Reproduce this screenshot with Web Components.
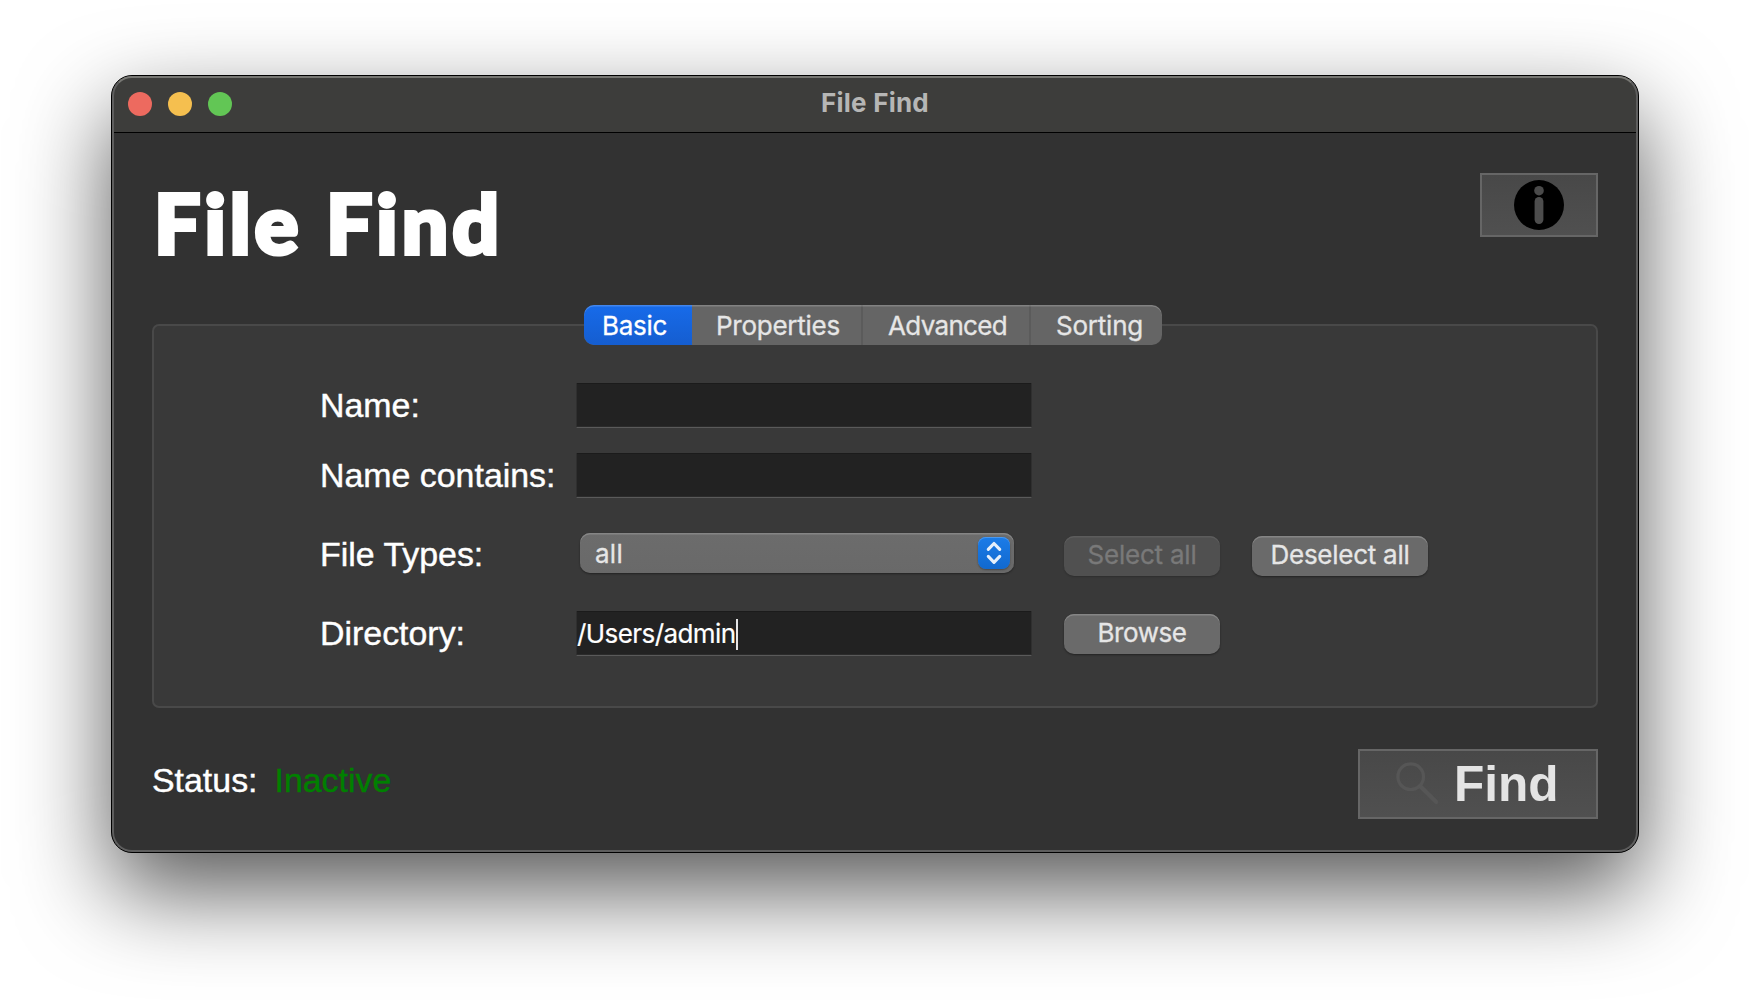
<!DOCTYPE html>
<html lang="en">
<head>
<meta charset="utf-8">
<title>File Find</title>
<style>
html,body{margin:0;height:100%;background:#fff;overflow:hidden}
</style>
</head>
<body>
<file-find-app></file-find-app>
<script>
const define = (name, html, setup) => {
  const t = document.createElement('template');
  t.innerHTML = html;
  customElements.define(name, class extends HTMLElement {
    constructor() {
      super();
      this.attachShadow({ mode: 'open' }).append(t.content.cloneNode(true));
    }
    connectedCallback() { if (setup) setup(this, this.shadowRoot); }
  });
};

/* Label whose tracking is adjusted so that it spans a given advance width */
define('fit-text', `<style>:host{display:inline-block;white-space:pre}span{display:inline-block}</style><span><slot></slot></span>`,
  (el, root) => {
    const w = +el.getAttribute('w');
    if (!w) return;
    const s = root.querySelector('span');
    const n = el.textContent.length;
    s.style.letterSpacing = ((w - s.getBoundingClientRect().width) / n) + 'px';
  });

define('title-bar', `<style>
:host{display:grid;grid-template-columns:1fr auto 1fr;align-items:center;height:57px;box-sizing:border-box;background:#3d3d3b;border-bottom:1px solid #000;box-shadow:inset 0 2px #777773;padding:0 16px}
.l{display:flex;gap:16px}
i{width:24px;height:24px;border-radius:50%}
.r{background:#ed6a5f}.y{background:#f5bf4f}.g{background:#62c655}
.t{font:700 26px/30px Inter,sans-serif;color:#b6b6b5;position:relative;top:-1px}
</style><div class="l"><i class="r"></i><i class="y"></i><i class="g"></i></div><div class="t"><fit-text w="108">File Find</fit-text></div>`);

define('push-button', `<style>
:host{display:flex;align-items:center;justify-content:center;height:40px;box-sizing:border-box;padding-bottom:3px;border-radius:10px;background:#6a6a6a;color:#e6e6e6;font:26px/30px Inter,sans-serif;-webkit-text-stroke:.3px;box-shadow:inset 0 1.5px #858585,0 1px 2px #0006}
:host([disabled]){background:#505050;color:#797979;box-shadow:inset 0 1.5px #5c5c5c,0 1px 2px #0003}
</style><slot></slot>`);

define('text-field', `<style>
:host{display:flex;align-items:center;width:456px;height:45px;box-sizing:border-box;background:#222;border:solid #2f2f2f;border-width:0 1px;border-bottom:1px solid #5a5a5a;box-shadow:inset 0 1px #1b1b1b,inset 0 -1px #2b2b2b;padding-top:2px;color:#fff;font:26px/30px Inter,sans-serif;-webkit-text-stroke:.2px}
:host([focused])::after{content:"";width:2px;height:31px;background:#e6e6e6}
</style><slot></slot>`);

define('pop-up', `<style>
:host{display:flex;align-items:center;justify-content:space-between;width:434px;height:40px;box-sizing:border-box;margin-left:4px;padding:0 4px 0 15px;border-radius:10px;background:linear-gradient(#6c6c6c,#696969);box-shadow:inset 0 1.5px #858585,0 1px 2px #0006;color:#e6e6e6;font:26px/30px Inter,sans-serif;-webkit-text-stroke:.3px}
::slotted(*){padding-top:2px}
svg{display:block;width:32px;height:32px;border-radius:8px;background:linear-gradient(#1b7ce8,#1169cf);box-shadow:inset 0 1px #4b99ef,0 1px 2px #0005}
</style><slot></slot><svg viewBox="0 0 33 33" fill="none" stroke="#e4effb" stroke-width="3.2" stroke-linecap="round" stroke-linejoin="round"><path d="M10.6 12.8L16.5 6.7l5.9 6.1M10.6 20l5.9 6.1 5.9-6.1"/></svg>`);

define('tab-bar', `<style>
:host{display:grid;grid-template-columns:108px 169px 168px 133px;width:578px;height:40px;border-radius:10px;overflow:hidden;background:#656565;color:#e6e6e6;font:26px/41px Inter,sans-serif;-webkit-text-stroke:.3px;position:relative}
:host::after{content:"";position:absolute;inset:0;border-radius:10px;box-shadow:inset 0 1.5px #ffffff30}
div{box-sizing:border-box}
.a{background:linear-gradient(#176bea,#155dcf);color:#fff;padding-left:18px}
.b{padding-left:24px}.c{padding-left:25px;border-left:2px solid #5b5b5b}.d{padding-left:25px;border-left:2px solid #5b5b5b}
</style><div class="a"><fit-text w="65">Basic</fit-text></div><div class="b"><fit-text w="124">Properties</fit-text></div><div class="c"><fit-text w="119">Advanced</fit-text></div><div class="d"><fit-text w="87">Sorting</fit-text></div>`);

define('form-label', `<style>:host{display:block;color:#fff;font:33.9px/44px "Liberation Sans",sans-serif;-webkit-text-stroke:.4px;white-space:nowrap}</style><slot></slot>`);

define('search-form', `<style>
:host{display:flex;flex-direction:column;align-items:center;box-sizing:border-box;width:1446px;height:384px;border:2px solid #494949;border-radius:7px;background:#393939}
tab-bar{margin-top:-21px;margin-left:-4px;flex:none}
.g{align-self:stretch;display:grid;grid-template-columns:257px 456px 156px 176px;grid-template-rows:44px 44px 62px 44px;row-gap:26px;margin:38px 0 0 165px}
form-label{padding-left:1px}
.type{align-self:center}
.s{margin-left:32px;width:156px;align-self:center}
.d{margin-left:64px;width:176px;align-self:center}
pop-up{align-self:center;position:relative;top:-1px}
.s,.d{position:relative;top:2px}
.bz{top:1px}
</style><tab-bar></tab-bar>
<div class="g">
<form-label>Name:</form-label><text-field></text-field><span></span><span></span>
<form-label>Name contains:</form-label><text-field></text-field><span></span><span></span>
<form-label class="type">File Types:</form-label><pop-up><fit-text w="28">all</fit-text></pop-up><push-button class="s" disabled><fit-text w="109">Select all</fit-text></push-button><push-button class="d"><fit-text w="139">Deselect all</fit-text></push-button>
<form-label>Directory:</form-label><text-field focused><fit-text w="158.5">/Users/admin</fit-text></text-field><push-button class="s bz"><fit-text w="89">Browse</fit-text></push-button>
</div>`);

define('icon-button', `<style>
:host{display:flex;align-items:center;box-sizing:border-box;border:2px solid #666;background:linear-gradient(#484848,#505050);color:#e4e4e4;font:700 49.6px/56px "Liberation Sans",sans-serif}
</style><slot></slot>`);

define('app-heading', `<style>
:host{display:flex;justify-content:space-between;align-items:flex-start}
h1{margin:-1px 0 0 2px;font:900 82px/100px Lato,sans-serif;color:#fff;-webkit-text-stroke:4px #fff}
icon-button{width:118px;height:64px;justify-content:center}
svg{display:block;width:50px;height:50px}
</style><h1><fit-text w="349">File Find</fit-text></h1>
<icon-button><svg viewBox="0 0 50 50"><circle cx="25" cy="25" r="25"/><circle cx="25" cy="10.7" r="4.8" fill="#4a4a4a"/><rect x="20.6" y="17" width="8.8" height="27" rx="4.4" fill="#4d4d4d"/></svg></icon-button>`);

define('status-bar', `<style>
:host{display:flex;justify-content:space-between;align-items:flex-start;margin-top:41px}
p{margin:9px 0 0;display:flex;gap:17px;font:33.9px/44px "Liberation Sans",sans-serif;-webkit-text-stroke:.4px;color:#fff}
.ok{color:#008000}
icon-button{width:240px;height:70px}
svg{display:block;width:44px;height:44px;margin:0 14px 0 36px}
</style><p><span>Status:</span><span class="ok">Inactive</span></p>
<icon-button><svg viewBox="0 0 44 44" fill="none" stroke="#565656" stroke-linecap="round"><circle cx="14.7" cy="14.7" r="12.8" stroke-width="3.2"/><path d="M24.5 24.5L40.2 40" stroke-width="4.2"/></svg>Find</icon-button>`);

define('app-window', `<style>
:host{display:block;box-sizing:border-box;width:1528px;height:778px;border:1px solid #000;border-radius:21px;background:#323232;overflow:hidden;position:relative;box-shadow:0 38px 92px rgba(0,0,0,.66)}
:host::after{content:"";position:absolute;inset:0;border-radius:20px;border:2px solid #5e5e5e;border-top-color:#777773;pointer-events:none}
main{padding:40px 40px 0}
</style><title-bar></title-bar><main><slot></slot></main>`);

define('file-find-app', `<style>
:host{display:block;padding:75px 0 0 111px}
app-heading{height:110px}
search-form{margin-top:41px}
</style><app-window><app-heading></app-heading><search-form></search-form><status-bar></status-bar></app-window>`);
</script>
</body>
</html>
